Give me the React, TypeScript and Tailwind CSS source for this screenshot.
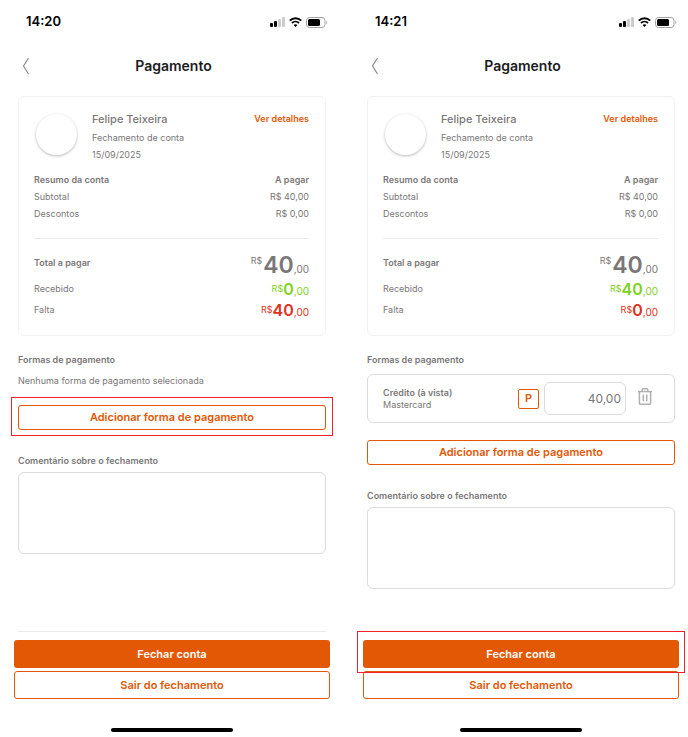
import React, { useId, useState } from 'react';
import { clsx } from 'clsx';

interface Payment {
  id: string;
  method: string;
  brand: string;
  amount: string;
}

interface Checkout {
  time: string;
  total: number;
  received: number;
  payments: Payment[];
  highlight: 'add' | 'close';
}

const checkouts: Checkout[] = [
  { time: '14:20', total: 40, received: 0, payments: [], highlight: 'add' },
  {
    time: '14:21',
    total: 40,
    received: 40,
    payments: [{ id: 'p1', method: 'Crédito (à vista)', brand: 'Mastercard', amount: '40,00' }],
    highlight: 'close',
  },
];

const StatusBar: React.FC<{ time: string }> = ({ time }) => (
  <div className="flex h-11 items-center justify-between pl-[26px] pr-[11px]">
    <span className="text-[13px] font-semibold text-black">{time}</span>
    <div className="flex items-center gap-1">
      <svg width="15" height="10" viewBox="0 0 15 10" aria-hidden="true">
        <rect x="0" y="6" width="3" height="4" rx="1" fill="#000" />
        <rect x="4" y="4" width="3" height="6" rx="1" fill="#000" />
        <rect x="8" y="2" width="3" height="8" rx="1" fill="#ccc" />
        <rect x="12" y="0" width="3" height="10" rx="1" fill="#ccc" />
      </svg>
      <svg width="13" height="10" viewBox="0 0 13 10" fill="none" stroke="#000" strokeWidth="1.9" aria-hidden="true">
        <path d="M0.8 3.6C4 0.4 9 0.4 12.2 3.6" />
        <path d="M3 6C5 4.1 8 4.1 10 6" />
        <path d="M6.5 10L4.6 8C5.6 7 7.4 7 8.4 8Z" fill="#000" stroke="none" />
      </svg>
      <svg width="22" height="11" viewBox="0 0 22 11" aria-hidden="true">
        <rect x="0.5" y="0.5" width="18.5" height="10" rx="3" fill="none" stroke="#a3a3a3" />
        <rect x="2" y="2" width="12" height="7" rx="1.5" fill="#000" />
        <path d="M20.3 3.8C21.6 4.4 21.6 6.6 20.3 7.2Z" fill="#a3a3a3" />
      </svg>
    </div>
  </div>
);

interface MoneyProps {
  value: number;
  large?: boolean;
  className?: string;
}

const Money: React.FC<MoneyProps> = ({ value, large, className }) => (
  <span className={clsx('flex items-start', className)}>
    <span className={clsx('text-[9px]', large ? 'mr-px leading-4' : 'leading-5')}>R$</span>
    <span className={clsx('font-semibold', large ? 'text-[23px] leading-6' : 'text-base leading-5')}>{value}</span>
    <span className="self-end text-[10px] leading-4">,00</span>
  </span>
);

const Highlight: React.FC<{ className: string }> = ({ className }) => (
  <span className={clsx('pointer-events-none absolute border border-[#f0202c]', className)} />
);

const TrashIcon = () => (
  <svg width="14" height="17" viewBox="0 0 14 17" fill="none" stroke="#b0b0b0" strokeWidth="1.5" aria-hidden="true">
    <path d="M0 3.6H14" />
    <path d="M4.2 3.4V2.2C4.2 1.3 4.8 0.8 5.6 0.8H8.4C9.2 0.8 9.8 1.3 9.8 2.2V3.4" />
    <path d="M1.4 3.6V15.2C1.4 15.8 1.8 16.2 2.4 16.2H11.6C12.2 16.2 12.6 15.8 12.6 15.2V3.6" />
    <path d="M5.3 6.4V13.2M8.7 6.4V13.2" />
  </svg>
);

const PaymentRow: React.FC<{ payment: Payment }> = ({ payment }) => {
  const [amount, setAmount] = useState(payment.amount);

  return (
    <div className="mt-1.5 mb-[17px] flex h-[49px] items-center rounded-md border border-[#dcdcdc] pl-[15px] pr-[22px]">
      <div className="flex-1 text-[9px] leading-3">
        <p className="font-semibold">{payment.method}</p>
        <p>{payment.brand}</p>
      </div>
      <button className="h-5 w-[21px] rounded-xs border border-[#e35805] pb-0.5 text-[11px] leading-4 font-semibold text-[#e35805]">
        P
      </button>
      <input
        aria-label="Valor"
        value={amount}
        onChange={(e) => setAmount(e.target.value)}
        className="ml-[5px] h-[33px] w-[82px] rounded-md border border-[#dcdcdc] pr-1 text-right text-xs text-[#7a7778]"
      />
      <button aria-label="Remover" className="ml-3 pb-1">
        <TrashIcon />
      </button>
    </div>
  );
};

const PaymentScreen: React.FC<{ checkout: Checkout }> = ({ checkout }) => {
  const { time, total, received, payments, highlight } = checkout;
  const commentId = useId();
  const [comment, setComment] = useState('');

  return (
    <section className="flex min-h-screen flex-col">
      <StatusBar time={time} />

      <header className="flex h-11 items-center px-[22px]">
        <button aria-label="Voltar" className="w-2">
          <svg width="8" height="18" viewBox="0 0 8 18" fill="none" stroke="#8c8c8c" strokeWidth="1.2">
            <path d="M6.5 1L1.5 9L6.5 17" />
          </svg>
        </button>
        <h1 className="flex-1 text-center text-sm font-semibold text-[#1c1c1e]">Pagamento</h1>
      </header>

      <main className="pl-[18px] pr-[13px]">
        <div className="mt-2 rounded-md border border-[#f1f1f1] pt-3.5 pr-4 pb-[15px] pl-[15px]">
          <div className="flex">
            <div className="mt-[3px] ml-0.5 h-[41px] w-[41px] rounded-full bg-white shadow-[0_1px_3px_rgba(0,0,0,0.28)]" />
            <div className="ml-[15px] flex-1">
              <p className="text-[11px] leading-4 font-medium">Felipe Teixeira</p>
              <p className="mt-0.5 text-[9px] leading-[17px]">Fechamento de conta</p>
              <p className="text-[9px] leading-[17px]">15/09/2025</p>
            </div>
            <a href="#detalhes" className="text-[9px] leading-[15px] font-semibold text-[#e35805]">
              Ver detalhes
            </a>
          </div>

          <dl className="mt-2 text-[9px] leading-[17px]">
            <div className="flex justify-between font-semibold">
              <dt>Resumo da conta</dt>
              <dd>A pagar</dd>
            </div>
            <div className="flex justify-between">
              <dt>Subtotal</dt>
              <dd>R$ {total},00</dd>
            </div>
            <div className="flex justify-between">
              <dt>Descontos</dt>
              <dd>R$ 0,00</dd>
            </div>
          </dl>

          <dl className="mt-4 border-t border-[#e9e9e9] pt-3.5 text-[9px]">
            <div className="flex h-6 items-start justify-between">
              <dt className="leading-5 font-semibold">Total a pagar</dt>
              <dd>
                <Money value={total} large />
              </dd>
            </div>
            <div className="mt-0.5 flex items-center justify-between">
              <dt>Recebido</dt>
              <dd>
                <Money value={received} className="text-[#7ed321]" />
              </dd>
            </div>
            <div className="mt-px flex items-center justify-between">
              <dt>Falta</dt>
              <dd>
                <Money value={total - received} className="text-[#e0321c]" />
              </dd>
            </div>
          </dl>
        </div>

        <h2 className="mt-4 text-[9px] leading-4 font-semibold">Formas de pagamento</h2>
        {payments.length === 0 && (
          <p className="mt-[5px] text-[9px] leading-4">Nenhuma forma de pagamento selecionada</p>
        )}
        {payments.map((payment) => (
          <PaymentRow key={payment.id} payment={payment} />
        ))}

        <div className="relative mt-4">
          <button className="block h-[25px] w-full rounded-[3px] border border-[#e35805] text-[11px] font-semibold text-[#e35805]">
            Adicionar forma de pagamento
          </button>
          {highlight === 'add' && <Highlight className="-inset-x-[7px] -top-2 -bottom-1.5" />}
        </div>

        <label htmlFor={commentId} className="mt-[23px] block text-[9px] leading-4 font-semibold">
          Comentário sobre o fechamento
        </label>
        <textarea
          id={commentId}
          value={comment}
          onChange={(e) => setComment(e.target.value)}
          className="mt-[3px] block h-[82px] w-full resize-none rounded-md border border-[#dcdcdc]"
        />
      </main>

      <footer className="mt-auto pb-[5px] pl-[14px] pr-[9px]">
        {highlight === 'add' && <hr className="mx-1 border-[#e9e9e9]" />}
        <div className="relative mt-2">
          <button className="block h-7 w-full rounded-[3px] bg-[#e35805] text-[11px] font-semibold text-white">
            Fechar conta
          </button>
          {highlight === 'close' && <Highlight className="-inset-x-1.5 -top-[9px] -bottom-[5px]" />}
        </div>
        <button className="mt-[3px] block h-7 w-full rounded-[3px] border border-[#e35805] text-[11px] font-semibold text-[#e35805]">
          Sair do fechamento
        </button>
        <div className="mx-auto mt-[29px] h-1 w-[122px] rounded-full bg-black" />
      </footer>
    </section>
  );
};

export default function App() {
  return (
    <div className="grid grid-cols-2 gap-2.5 bg-white font-['Inter',sans-serif] text-[#7a7778]">
      {checkouts.map((checkout) => (
        <PaymentScreen key={checkout.time} checkout={checkout} />
      ))}
    </div>
  );
}
